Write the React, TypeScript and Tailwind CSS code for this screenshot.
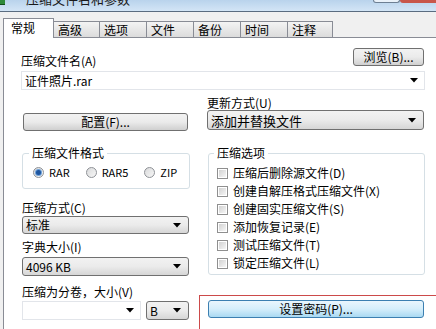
import type { ReactNode } from "react";

const font = { fontFamily: '"Noto Sans CJK SC", "Liberation Sans", sans-serif' };

function Arrow() {
  return (
    <svg width="8" height="5" viewBox="0 0 8 5" className="shrink-0">
      <path d="M0 0h8L4 4.5z" fill="#000" />
    </svg>
  );
}

function Tab({ label, w }: { label: string; w: string }) {
  return (
    <div
      className={`${w} h-[16px] -ml-px flex items-center pl-[4px] text-[12px] leading-none border border-b-0 border-[#898c95] bg-gradient-to-b from-[#f3f3f3] to-[#dcdcdc]`}
    >
      {label}
    </div>
  );
}

function Button({ children, className }: { children: ReactNode; className: string }) {
  return (
    <div
      className={`${className} flex items-center justify-center text-[12px] leading-none rounded-[3px] border border-[#707070] bg-gradient-to-b from-[#f2f2f2] via-[#ebebeb] to-[#d0d0d0]`}
    >
      {children}
    </div>
  );
}

function Select({ value, className }: { value: string; className: string }) {
  return (
    <div
      className={`${className} flex items-center pl-[3px] pr-[7px] text-[12px] leading-none rounded-[3px] border border-[#707070] bg-gradient-to-b from-[#f2f2f2] via-[#ebebeb] to-[#d6d6d6]`}
    >
      <span className="flex-1">{value}</span>
      <Arrow />
    </div>
  );
}

function Radio({ label, checked }: { label: string; checked?: boolean }) {
  return (
    <div className="flex items-center gap-[5px] text-[11px] leading-none">
      <div className="w-[11px] h-[11px] rounded-full border border-[#8e9196] bg-gradient-to-br from-[#d9dadb] to-[#f7f7f7] flex items-center justify-center">
        {checked && <div className="w-[5px] h-[5px] rounded-full bg-[#1e56a0] ring-1 ring-[#6ea0d8]" />}
      </div>
      <span>{label}</span>
    </div>
  );
}

function Check({ label }: { label: string }) {
  return (
    <div className="h-[18px] flex items-center gap-[5px] text-[12px] leading-none">
      <div className="w-[11px] h-[11px] border border-[#8f8f8f] bg-white p-[1px]">
        <div className="w-full h-full bg-gradient-to-br from-[#d2d2d2] to-[#f6f6f6]" />
      </div>
      <span>{label}</span>
    </div>
  );
}

export default function App() {
  return (
    <div className="w-[436px] h-[329px] overflow-hidden bg-[#f0f0f0] text-black flex flex-col" style={font}>
      {/* title bar */}
      <div className="h-[12px] shrink-0 flex overflow-hidden border-b border-[#5a6c80] bg-gradient-to-b from-[#b9d3ec] to-[#d3e5f6]">
        <div className="w-[5px] h-[5px] bg-[#2e8a3a] border-b border-[#124d1b]" />
        <div className="ml-[21px] -mt-[9px] text-[13px] leading-[16px] text-[#1a1a1a]">压缩文件名和参数</div>
        <div className="ml-auto w-[27px] h-[3px] border border-t-0 border-[#6d7f93] rounded-b-[3px] bg-[#e9f1f9]" />
        <div className="w-[36px] h-[3px] bg-[#c8564a] rounded-bl-[3px]" />
      </div>

      {/* tabs */}
      <div className="h-[25px] shrink-0 flex items-end pl-[3px]">
        <div className="w-[51px] h-[20px] relative z-10 -mb-px flex items-start pt-[2px] pl-[7px] text-[12px] leading-[14px] bg-white border border-b-0 border-[#898c95]">
          常规
        </div>
        <Tab label="高级" w="w-[47px]" />
        <Tab label="选项" w="w-[48px]" />
        <Tab label="文件" w="w-[48px]" />
        <Tab label="备份" w="w-[48px]" />
        <Tab label="时间" w="w-[48px]" />
        <Tab label="注释" w="w-[46px]" />
      </div>

      {/* panel */}
      <div className="flex-1 ml-[3px] bg-white border-l border-t border-[#898c95] pl-[17px] flex flex-col">
        <div className="mt-[10px] h-[18px] flex items-end">
          <span className="text-[12px] leading-none mb-[-1px]">压缩文件名(A)</span>
          <Button className="ml-auto mr-[12px] w-[71px] h-[18px]">浏览(B)...</Button>
        </div>
        <div className="mt-[5px] w-[404px] h-[19px] flex items-center pl-[3px] pr-[6px] border border-[#e2e5ea] text-[12px] leading-none">
          <span className="flex-1">证件照片.rar</span>
          <Arrow />
        </div>

        <div className="flex gap-[13px]">
          {/* left column */}
          <div className="w-[173px] flex flex-col">
            <Button className="mt-[23px] ml-[2px] w-[165px] h-[18px]">配置(F)...</Button>
            <div className="mt-[22px] ml-[1px] w-[168px] h-[36px] relative border border-[#d5dfe5] rounded-[3px] flex items-center gap-[16px] pl-[10px] pt-[2px]">
              <span className="absolute -top-[7px] left-[6px] bg-white px-[3px] text-[12px] leading-[12px]">压缩文件格式</span>
              <Radio label="RAR" checked />
              <Radio label="RAR5" />
              <Radio label="ZIP" />
            </div>
            <span className="mt-[13px] ml-[1px] text-[12px] leading-[12px]">压缩方式(C)</span>
            <Select value="标准" className="mt-[2px] ml-[1px] w-[167px] h-[18px]" />
            <span className="mt-[7px] ml-[1px] text-[12px] leading-[12px]">字典大小(I)</span>
            <Select value="4096 KB" className="mt-[4px] ml-[1px] w-[167px] h-[19px]" />
            <span className="mt-[10px] ml-[1px] text-[12px] leading-[12px]">压缩为分卷，大小(V)</span>
            <div className="mt-[3px] ml-[1px] flex gap-[5px]">
              <div className="w-[119px] h-[19px] flex items-center justify-end pr-[6px] border border-[#e2e5ea]">
                <Arrow />
              </div>
              <Select value="B" className="w-[43px] h-[19px]" />
            </div>
          </div>

          {/* right column */}
          <div className="w-[218px] flex flex-col">
            <span className="mt-[7px] text-[12px] leading-[12px]">更新方式(U)</span>
            <Select value="添加并替换文件" className="mt-[1px] w-[217px] h-[20px] text-[13px]" />
            <div className="mt-[23px] ml-[1px] w-[217px] h-[122px] relative border border-[#d5dfe5] rounded-[3px] flex flex-col pl-[8px] pt-[10px]">
              <span className="absolute -top-[7px] left-[5px] bg-white px-[3px] text-[12px] leading-[12px]">压缩选项</span>
              <Check label="压缩后删除源文件(D)" />
              <Check label="创建自解压格式压缩文件(X)" />
              <Check label="创建固实压缩文件(S)" />
              <Check label="添加恢复记录(E)" />
              <Check label="测试压缩文件(T)" />
              <Check label="锁定压缩文件(L)" />
            </div>
            <div className="mt-[20px] -ml-[8px] w-[250px] h-[40px] border border-[#cc4a4a] pt-[4px] pl-[8px]">
              <div className="w-[216px] h-[18px] flex items-center justify-center text-[12px] leading-none rounded-[3px] border border-[#3c7fb1] bg-gradient-to-b from-[#eaf6fd] via-[#d5eefb] to-[#a9d9f2]">
                设置密码(P)...
              </div>
            </div>
          </div>
        </div>
      </div>
    </div>
  );
}
